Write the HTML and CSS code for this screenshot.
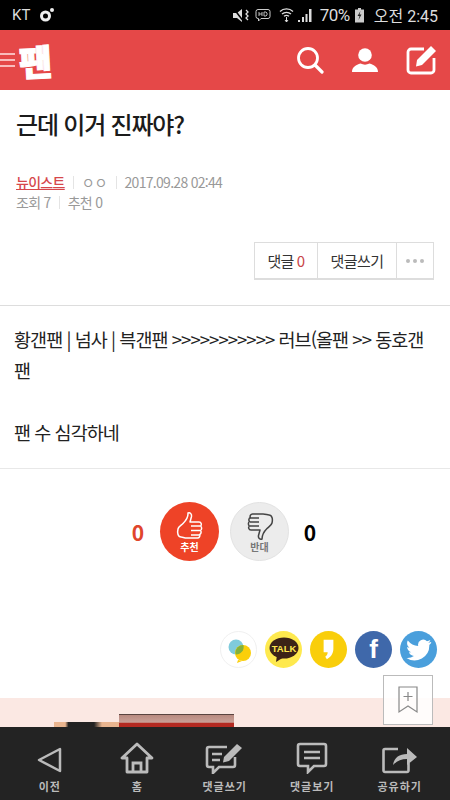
FILE: index.html
```html
<!DOCTYPE html>
<html lang="ko">
<head>
  <meta charset="UTF-8" />
  <meta name="viewport" content="width=device-width, initial-scale=1.0"/>
  <title>근데 이거 진짜야?</title>
  <link rel="stylesheet" href="styles.css">
</head>
<body>
  <div class="statusbar">
    <div class="status-left">
      <span>KT</span>
      <svg width="16" height="16" viewBox="0 0 16 16"><circle cx="6.500" cy="9" r="4" fill="none" stroke="#eee" stroke-width="3"/><circle cx="13" cy="3" r="2" fill="#eee"/></svg>
    </div>
    <div class="status-right">
      <svg width="18" height="15" viewBox="0 0 18 15"><path d="M1 5h4l5-4v13l-5-4H1z" fill="#ddd"/><path d="M2 1l10 13" stroke="#000" stroke-width="1.500"/><path d="M14 2l2 2-2 2 2 2-2 2 2 2" fill="none" stroke="#ddd" stroke-width="1.300"/></svg>
      <svg class="st-hd" width="16" height="15" viewBox="0 0 16 15"><path d="M3 1.500h10a2 2 0 0 1 2 2v5a2 2 0 0 1-2 2H6l-2.500 2.500v-2.500H3a2 2 0 0 1-2-2v-5a2 2 0 0 1 2-2z" fill="none" stroke="#ccc"/><path d="M4 4v4M7 4v4M4 6h3M9 4v4h2l1-1V5l-1-1z" fill="none" stroke="#ccc" stroke-width=".9"/></svg>
      <svg class="st-wifi" width="15" height="16" viewBox="0 0 15 16"><path d="M1 4.500c3.500-3.500 9.500-3.500 13 0M3 7c2.500-2.300 6.500-2.300 9 0M5 9.300c1.500-1.200 3.500-1.200 5 0" fill="none" stroke="#ddd" stroke-width="1.300"/><path d="M7.500 10v5M6 13l1.500 2 1.500-2" fill="none" stroke="#ddd"/></svg>
      <svg class="st-signal" width="15" height="15" viewBox="0 0 15 15"><rect x="1" y="12" width="2" height="2" fill="#ddd"/><rect x="5" y="9" width="2" height="5" fill="#ddd"/><rect x="8.500" y="6" width="2" height="8" fill="#ddd"/><rect x="12" y="1" width="2.500" height="13" fill="#ddd"/></svg>
      <span class="st-pct">70%</span>
      <svg class="st-batt" width="9" height="15" viewBox="0 0 9 15"><rect x="3" y="0" width="3" height="2" fill="#ccc"/><rect x="0" y="1.500" width="9" height="13" fill="#ccc"/><path d="M5.500 3L2.500 8h2l-1 4 3-5.500h-2z" fill="#222"/></svg>
      <span class="st-time">오전 2:45</span>
    </div>
  </div>

  <header class="topbar">
    <div class="brand">
      <div class="burger"><i></i><i></i><i></i></div>
      <span class="logo">팬</span>
    </div>
    <div class="top-icons">
      <svg width="28" height="28" viewBox="0 0 28 28"><circle cx="12" cy="12" r="9.500" fill="none" stroke="#fff" stroke-width="2.800"/><path d="M19 19l7 7" stroke="#fff" stroke-width="3.200" stroke-linecap="round"/></svg>
      <svg width="28" height="28" viewBox="0 0 28 28"><circle cx="14" cy="9" r="6.800" fill="#fff"/><path d="M1 26c0-5 4-7 8.500-8.500 3 1.500 6 1.500 9 0C23 19 27 21 27 26z" fill="#fff"/></svg>
      <svg width="32" height="30" viewBox="0 0 32 30"><path d="M18 4H5a3 3 0 0 0-3 3v18a3 3 0 0 0 3 3h20a3 3 0 0 0 3-3V13" fill="none" stroke="#fff" stroke-width="2.800"/><path d="M11 15L25 1l5 5-14 14-6 1.500z" fill="#fff"/></svg>
    </div>
  </header>

  <main class="content">
    <h1 class="title">근데 이거 진짜야?</h1>
    <div class="meta">
      <div class="meta-row">
        <a class="channel">뉴이스트</a><span class="sep"></span><span class="nick">ㅇㅇ</span><span class="sep"></span><span>2017.09.28 02:44</span>
      </div>
      <div class="meta-row">
        <span>조회 7</span><span class="sep"></span><span>추천 0</span>
      </div>
    </div>

    <div class="btn-wrap">
      <div class="btn-group">
        <div class="btn btn-count">댓글 <em>0</em></div>
        <div class="btn btn-write">댓글쓰기</div>
        <div class="btn btn-more"><i></i><i></i><i></i></div>
      </div>
    </div>

    <div class="post">
      <p>황갠팬 | 넘사 | 븍갠팬 &gt;&gt;&gt;&gt;&gt;&gt;&gt;&gt;&gt;&gt;&gt; 러브(올팬 &gt;&gt; 동호갠팬</p>
      <p>&nbsp;</p>
      <p>팬 수 심각하네</p>
    </div>

    <div class="vote">
      <span class="vote-num up">0</span>
      <div class="vote-btn vote-up">
        <svg width="28" height="30" viewBox="0 0 28 30"><path d="M12 2c2-1 4 1 3.500 3.500L14 11h9c2.500 0 3 3 1.500 4 1.500 1 1.500 3.500 0 4.500 1 1 .8 3.300-.8 4 .6 1.500-.4 3.500-2.200 3.500H11c-3 0-4-1-6-1-3 0-4-4-3-8 .6-2.500 3-3.500 5-5.500 2.500-2.500 5-6 5-9.500z" fill="none" stroke="#fff" stroke-width="1.500" stroke-linejoin="round"/><path d="M15 15h9M15 19.500h9M15 24h8" stroke="#fff" stroke-width="1.300"/></svg>
        <span>추천</span>
      </div>
      <div class="vote-btn vote-down">
        <svg width="28" height="30" viewBox="0 0 28 30"><path d="M16 28c-2 1-4-1-3.500-3.500L14 19H5c-2.500 0-3-3-1.500-4-1.500-1-1.500-3.500 0-4.500-1-1-.8-3.300.8-4C3.700 5 4.700 3 6.500 3H17c3 0 4 1 6 1 3 0 4 4 3 8-.6 2.500-3 3.500-5 5.500-2.500 2.500-5 6-5 10.500z" fill="none" stroke="#444" stroke-width="1.500" stroke-linejoin="round"/><path d="M4 7h9M4 11h9M4 15h9" stroke="#444" stroke-width="1.300"/></svg>
        <span>반대</span>
      </div>
      <span class="vote-num">0</span>
    </div>

    <div class="share">
      <div class="sns sns-band">
        <svg width="30" height="30" viewBox="0 0 30 30"><circle cx="12" cy="12" r="7.500" fill="#7fcbdc"/><circle cx="19" cy="18" r="8" fill="#fbcf0a"/><path d="M14 25l-1 3 5-2z" fill="#fbcf0a"/><path d="M12 19.500a7.500 7.500 0 0 0 7.400-9.500 8 8 0 0 0-8 8z" fill="#82b13c"/></svg>
      </div>
      <div class="sns sns-talk">
        <svg width="30" height="26" viewBox="0 0 30 26"><ellipse cx="15" cy="11" rx="14.500" ry="10.500" fill="#3c2317"/><path d="M8 18l-1 7 8-5z" fill="#3c2317"/><text x="15" y="14.500" text-anchor="middle" class="talk-text">TALK</text></svg>
      </div>
      <div class="sns sns-story">
        <svg width="13" height="23" viewBox="0 0 16 26"><path d="M2 1h12v11c0 6-3 10-8 13l-2-3c2-1.500 3-3.500 3-5.500H2z" fill="#fff"/></svg>
      </div>
      <div class="sns sns-fb"><span>f</span></div>
      <div class="sns sns-tw">
        <svg width="26" height="22" viewBox="0 0 26 22"><path d="M25 3c-1 .5-2 .8-3 .9 1-.7 2-1.700 2.300-3-1 .6-2.200 1-3.300 1.300A5.200 5.200 0 0 0 12.200 7 14.700 14.700 0 0 1 1.800 1.500C.4 4 1.100 7 3.500 8.600c-.9 0-1.700-.3-2.400-.6 0 2.500 1.800 4.700 4.200 5.200-.8.200-1.500.2-2.300.1.600 2 2.600 3.500 4.900 3.600A10.500 10.500 0 0 1 .5 19a14.800 14.800 0 0 0 22.800-13c1-.8 1.800-1.800 2-3z" fill="#fff"/></svg>
      </div>
    </div>
  </main>

  <div class="ad-band">
    <div class="ad-left"></div>
    <div class="ad-book"></div>
  </div>

  <nav class="bottom-nav">
    <div class="nav-item">
      <svg width="28" height="28" viewBox="0 0 28 28"><path d="M24 3v22L3 14z" fill="none" stroke="#bbb" stroke-width="2.500" stroke-linejoin="round"/></svg>
      <span>이전</span>
    </div>
    <div class="nav-item">
      <svg width="34" height="32" viewBox="0 0 34 32"><path d="M17 2L2 16h5v14h20V16h5z" fill="none" stroke="#bbb" stroke-width="2.800" stroke-linejoin="round"/><path d="M13 29v-8h8v8" fill="none" stroke="#bbb" stroke-width="2.800"/></svg>
      <span>홈</span>
    </div>
    <div class="nav-item">
      <svg width="40" height="32" viewBox="0 0 40 32"><path d="M22 5H4a2 2 0 0 0-2 2v16a2 2 0 0 0 2 2h4v6l6-6h14a2 2 0 0 0 2-2v-8" fill="none" stroke="#bbb" stroke-width="2.600"/><path d="M7 12h10M7 18h8" stroke="#bbb" stroke-width="2.400"/><path d="M19 15L32 2l5 4-13 13-6 1.500z" fill="#bbb"/></svg>
      <span>댓글쓰기</span>
    </div>
    <div class="nav-item">
      <svg width="32" height="32" viewBox="0 0 32 32"><path d="M4 2h24a2 2 0 0 1 2 2v18a2 2 0 0 1-2 2H18l-6 6v-6H4a2 2 0 0 1-2-2V4a2 2 0 0 1 2-2z" fill="none" stroke="#bbb" stroke-width="2.600"/><path d="M8 10h16M8 16h16" stroke="#bbb" stroke-width="2.400"/></svg>
      <span>댓글보기</span>
    </div>
    <div class="nav-item">
      <svg width="36" height="30" viewBox="0 0 36 30"><path d="M16 5H3a1.500 1.500 0 0 0-1.500 1.500v20A1.500 1.500 0 0 0 3 28h22a1.500 1.500 0 0 0 1.500-1.500V19" fill="none" stroke="#bbb" stroke-width="2.600"/><path d="M11 21c1-7 6-11 14-11V4l10 9-10 8v-6c-6 0-10 2-14 6z" fill="#bbb"/></svg>
      <span>공유하기</span>
    </div>
  </nav>

  <div class="bookmark">
    <svg width="22" height="28" viewBox="0 0 22 28"><path d="M2 1h18v25l-9-6-9 6z" fill="none" stroke="#888" stroke-width="1.200"/><path d="M11 6v9M6.500 10.500h9" stroke="#888" stroke-width="1.200"/></svg>
  </div>
</body>
</html>
```

FILE: styles.css
```css
* {
  box-sizing: border-box;
}

html, body {
  height: 800px;
  overflow: hidden;
}

body {
  margin: 0;
  position: relative;
  display: flex;
  flex-direction: column;
  font-family: "Noto Sans CJK KR", "Noto Sans", sans-serif;
  background-color: #fff;
  color: #222;
}

/* status bar */
.statusbar {
  height: 30px;
  background-color: #000;
  color: #ddd;
  display: flex;
  justify-content: space-between;
  align-items: center;
  padding: 0 12px 0 12px;
  font-family: Roboto, "Noto Sans CJK KR", sans-serif;
  font-size: 16px;
}

.status-left {
  display: flex;
  align-items: center;
  gap: 9px;
  font-size: 15px;
}

.status-right {
  display: flex;
  align-items: center;
  gap: 5px;
}

.st-wifi {
  margin-left: 3px;
}

.st-signal {
  margin-left: -2px;
}

.st-pct {
  margin-left: 3px;
  font-size: 17px;
  letter-spacing: -0.5px;
}

.st-time {
  margin-left: 5px;
  white-space: nowrap;
}

/* header */
.topbar {
  height: 60px;
  background-color: #E54848;
  display: flex;
  justify-content: space-between;
  align-items: center;
  padding-right: 12px;
}

.brand {
  display: flex;
  align-items: center;
  gap: 4px;
}

.burger {
  width: 15px;
}

.burger i {
  display: block;
  height: 2px;
  margin: 4px 0;
  background-color: #f9bcbc;
}

.logo {
  color: #fff;
  font-size: 36px;
  font-weight: 900;
  line-height: 44px;
  -webkit-text-stroke: 1px #fff;
  transform: rotate(-3deg);
}

.top-icons {
  display: flex;
  align-items: center;
  gap: 27px;
}

/* article head */
.content {
  flex: 1;
  min-height: 0;
}

.title {
  margin: 0;
  padding: 16px 16px 0;
  font-size: 24px;
  line-height: 36px;
  font-weight: 500;
  letter-spacing: -1.2px;
  color: #1b1b1b;
}

.meta {
  margin-top: 30px;
  padding: 0 16px;
  font-size: 14px;
  letter-spacing: -0.7px;
  color: #999;
}

.meta-row {
  display: flex;
  align-items: center;
  height: 20px;
}

.channel {
  color: #D6474B;
  font-weight: 500;
  text-decoration: underline;
}

.nick {
  letter-spacing: 0;
}

.sep {
  width: 1px;
  height: 13px;
  margin: 0 8px;
  background-color: #e4e4e4;
}

.btn-wrap {
  display: flex;
  justify-content: flex-end;
  margin-top: 30px;
  padding-right: 16px;
}

.btn-group {
  display: flex;
  height: 38px;
  border: 1px solid #ddd;
  border-bottom-width: 2px;
  border-right-width: 1px;
}

.btn {
  display: flex;
  align-items: center;
  justify-content: center;
  font-size: 15px;
  letter-spacing: -0.6px;
  color: #333;
  border-right: 1px solid #ddd;
}

.btn em {
  font-style: normal;
  color: #C8464A;
  margin-left: 3px;
}

.btn-count {
  width: 63px;
}

.btn-write {
  width: 79px;
}

.btn-more {
  width: 36px;
  gap: 3px;
  border-right: 0;
}

.btn-more i {
  width: 4px;
  height: 4px;
  border-radius: 50%;
  background-color: #bbb;
}

/* post body */
.post {
  margin-top: 25px;
  padding: 18px 14px 20px;
  border-top: 1px solid #ddd;
  border-bottom: 1px solid #e8e8e8;
  font-size: 18.500px;
  line-height: 31px;
  letter-spacing: -0.95px;
  color: #222;
}

.post p {
  margin: 0;
}

/* vote */
.vote {
  display: flex;
  align-items: center;
  justify-content: center;
  margin-top: 33px;
  padding-right: 2px;
}

.vote-num {
  width: 16px;
  font-size: 21px;
  font-weight: 700;
  color: #000;
  text-align: center;
}

.vote-num.up {
  color: #E0452C;
  margin-right: 14px;
}

.vote-btn {
  width: 59px;
  height: 59px;
  border-radius: 50%;
  display: flex;
  flex-direction: column;
  align-items: center;
  justify-content: center;
  font-size: 10px;
  font-weight: 700;
  line-height: 12px;
}

.vote-btn svg {
  margin-top: 1px;
}

.vote-up {
  background-color: #EE4327;
  color: #fff;
  margin-right: 11px;
}

.vote-down {
  background-color: #ececec;
  border: 1px solid #e2e2e2;
  color: #777;
  margin-right: 13px;
}

/* sns */
.share {
  display: flex;
  justify-content: flex-end;
  gap: 8px;
  margin-top: 70px;
  padding-right: 13px;
}

.sns {
  width: 37px;
  height: 37px;
  border-radius: 50%;
  display: flex;
  align-items: center;
  justify-content: center;
}

.sns-band {
  border: 1px solid #f0f0f0;
  background-color: #fff;
}

.sns-talk {
  background-color: #FEE94E;
}

.talk-text {
  font-family: "Liberation Sans", sans-serif;
  font-size: 9.500px;
  font-weight: 700;
  fill: #FEE94E;
}

.sns-story {
  background-color: #F9CE0B;
}

.sns-fb {
  background-color: #3F68AA;
  color: #fff;
  font-family: "Liberation Sans", sans-serif;
  font-size: 26px;
  font-weight: 700;
}

.sns-tw {
  background-color: #4A9FDC;
}

/* ad strip */
.ad-band {
  height: 29px;
  background-color: #FBE8E3;
  position: relative;
  overflow: hidden;
}

.ad-left {
  position: absolute;
  left: 54px;
  top: 24px;
  width: 80px;
  height: 5px;
  background: linear-gradient(90deg, #eab58f 14%, #222 18%, #222 50%, #e8b48f 60%);
}

.ad-book {
  position: absolute;
  left: 119px;
  top: 16px;
  width: 115px;
  height: 13px;
  border-top: 1px solid #5a4440;
  background: linear-gradient(#b88a80 0, #c9a097 60%, #b32a22 70%);
}

/* bottom nav */
.bottom-nav {
  height: 73px;
  background-color: #232323;
  display: flex;
  padding: 0 6px;
}

.nav-item {
  width: 87.500px;
  display: flex;
  flex-direction: column;
  align-items: center;
  justify-content: flex-end;
  gap: 4px;
  padding-bottom: 6px;
  color: #bbb;
  font-size: 11px;
  font-weight: 700;
  letter-spacing: 1px;
  line-height: 16px;
}

.bookmark {
  position: absolute;
  left: 383px;
  top: 675px;
  width: 50px;
  height: 50px;
  border: 1px solid #bbb;
  background-color: rgba(255,255,255,0.85);
  display: flex;
  align-items: center;
  justify-content: center;
}
```
